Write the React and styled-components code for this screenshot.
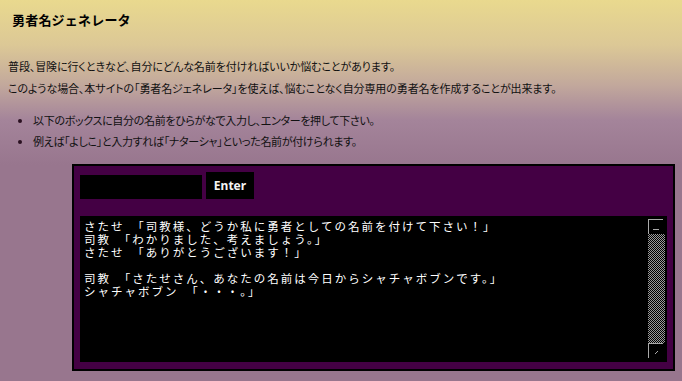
import React from 'react';
import styled, { createGlobalStyle } from 'styled-components';

const GlobalStyle = createGlobalStyle`
	html, body {
		margin: 0;
		padding: 0;
	}
	body {
		min-height: 381px;
		background: linear-gradient(
			to bottom,
			#e9d98e 0px,
			#dcc896 45px,
			#c2a89c 85px,
			#a4849a 120px,
			#98768e 165px,
			#98768e 100%
		);
		background-attachment: fixed;
		font-family: 'Noto Sans CJK JP', 'Noto Sans', sans-serif;
		color: #111;
	}
`;

const lines = [
	'さたせ　「司教様、どうか私に勇者としての名前を付けて下さい！」',
	'司教　「わかりました、考えましょう。」',
	'さたせ　「ありがとうございます！」',
	'',
	'司教　「さたせさん、あなたの名前は今日からシャチャボブンです。」',
	'シャチャボブン　「・・・。」',
];

export default function App() {
	return (
		<>
			<GlobalStyle />
			<Page>
				<Title>勇者名ジェネレータ</Title>
				<Intro>
					普段、冒険に行くときなど、自分にどんな名前を付ければいいか悩むことがあります。
					<br />
					このような場合、本サイトの「勇者名ジェネレータ」を使えば、悩むことなく自分専用の勇者名を作成することが出来ます。
				</Intro>
				<Steps>
					<li>以下のボックスに自分の名前をひらがなで入力し、エンターを押して下さい。</li>
					<li>例えば「よしこ」と入力すれば「ナターシャ」といった名前が付けられます。</li>
				</Steps>
				<Panel>
					<Controls>
						<NameInput type="text" />
						<EnterButton type="button">Enter</EnterButton>
					</Controls>
					<Log>
						<LogText>
							{lines.map((line, i) => (
								<LogLine key={i}>{line || '\u00a0'}</LogLine>
							))}
						</LogText>
						<ScrollBar>
							<ScrollButton>
								<svg width="8" height="8" viewBox="0 0 8 8">
									<line x1="1" y1="6.5" x2="7" y2="6.5" stroke="#aaa" strokeWidth="1" />
								</svg>
							</ScrollButton>
							<ScrollTrack />
							<ScrollButton>
								<svg width="8" height="8" viewBox="0 0 8 8">
									<line x1="3" y1="7" x2="6" y2="4" stroke="#aaa" strokeWidth="1" />
								</svg>
							</ScrollButton>
						</ScrollBar>
					</Log>
				</Panel>
			</Page>
		</>
	);
}

const Page = styled.div`
	padding: 0 8px;
	display: flex;
	flex-direction: column;
`;

const Title = styled.h1`
	margin: 0;
	padding: 12px 0 0 4px;
	font-size: 13px;
	line-height: 16px;
	font-weight: bold;
	letter-spacing: 0.2px;
	color: #000;
`;

const Intro = styled.p`
	margin: 27px 0 0;
	font-size: 11px;
	line-height: 22px;
	letter-spacing: -0.1px;
	font-feature-settings: 'palt';
	white-space: nowrap;
`;

const Steps = styled.ul`
	margin: 11px 0 0;
	padding-left: 25px;
	font-size: 11px;
	line-height: 21px;
	letter-spacing: -0.32px;
	font-feature-settings: 'palt';
	white-space: nowrap;
	& li::marker {
		color: #2a1020;
	}
`;

const Panel = styled.div`
	margin: 12px 0 0 64px;
	width: 587px;
	padding: 6px 6px 7px;
	background: #440044;
	border: 2px solid #000;
	display: flex;
	flex-direction: column;
	gap: 17px;
`;

const Controls = styled.div`
	display: flex;
	align-items: flex-end;
	gap: 4px;
`;

const NameInput = styled.input`
	width: 122px;
	height: 24px;
	box-sizing: border-box;
	border: none;
	background: #000;
	color: #fff;
	outline: none;
	padding: 0 4px;
`;

const EnterButton = styled.button`
	width: 48px;
	height: 27px;
	border: none;
	background: #000;
	color: #f4f4f4;
	font-family: 'Noto Sans', 'Open Sans', sans-serif;
	font-weight: bold;
	font-size: 12px;
	padding: 0;
`;

const Log = styled.div`
	height: 146px;
	background: #000;
	display: flex;
	justify-content: space-between;
`;

const LogText = styled.div`
	padding: 4px 0 0 4px;
	color: #fff;
	font-size: 11.5px;
	letter-spacing: 2px;
	white-space: nowrap;
`;

const LogLine = styled.div`
	height: 13px;
	line-height: 13px;
`;

const ScrollBar = styled.div`
	width: 17px;
	margin: 3px 2px 4px 0;
	display: flex;
	flex-direction: column;
	align-items: flex-end;
`;

const ScrollButton = styled.div`
	width: 15px;
	height: 15px;
	margin-right: 2px;
	box-sizing: border-box;
	border-top: 1px solid #aaa;
	border-left: 1px solid #aaa;
	background: #000;
	display: flex;
	align-items: flex-start;
	justify-content: center;
	padding-top: 3px;
`;

const ScrollTrack = styled.div`
	flex: 1;
	width: 17px;
	background-image: repeating-conic-gradient(#9a9a9a 0 25%, #000 0 50%);
	background-size: 2px 2px;
`;
